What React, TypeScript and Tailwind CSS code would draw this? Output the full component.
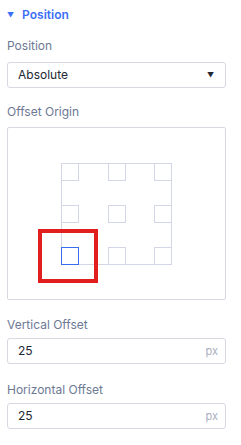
import React from 'react';

const font = { fontFamily: 'Inter, "Noto Sans", sans-serif' };

const Cell: React.FC<{ active?: boolean }> = ({ active }) => (
  <div className={`w-[18px] h-[18px] border ${active ? 'border-[#3a6cf0]' : 'border-[#d3d6e6]'}`} />
);

const OffsetInput: React.FC<{ value: string }> = ({ value }) => (
  <div className="h-[26px] rounded-[3px] border border-[#d6d9e4] bg-white flex items-center pl-[10px] pr-[7px]">
    <span className="flex-1 text-[12px] text-[#222733]">{value}</span>
    <span className="text-[11px] text-[#a9aec0]">px</span>
  </div>
);

export default function App() {
  // selected origin: bottom-left
  const grid = [
    [false, false, false],
    [false, false, false],
    [true, false, false],
  ];

  return (
    <div className="w-[241px] h-[445px] bg-white pl-[7px] pr-[15px] flex flex-col" style={font}>
      {/* Section header */}
      <div className="flex items-center gap-[8px] h-[20px] mt-[5px]">
        <span className="text-[7px] leading-none text-[#3b6ff6]">▼</span>
        <span className="text-[12px] font-semibold text-[#3b6ff6]">Position</span>
      </div>

      <label className="mt-[13px] h-[16px] leading-[16px] text-[12px] text-[#6d7894]">Position</label>
      <div className="mt-[8px] h-[26px] rounded-[3px] border border-[#d6d9e4] flex items-center pl-[10px] pr-[11px]">
        <span className="flex-1 text-[12px] text-[#222733]">Absolute</span>
        <span className="text-[7px] leading-none text-[#222733]">▼</span>
      </div>

      <label className="mt-[16px] h-[16px] leading-[16px] text-[12px] text-[#6d7894]">Offset Origin</label>
      <div className="mt-[7px] h-[173px] border border-[#d6d9e4] rounded-[2px] relative flex items-center justify-center">
        <div className="w-[111px] h-[102px] shadow-[inset_0_0_0_1px_#d3d6e6] flex flex-col justify-between">
          {grid.map((row, r) => (
            <div key={r} className="flex justify-between">
              {row.map((active, c) => (
                <Cell key={c} active={active} />
              ))}
            </div>
          ))}
        </div>
        {/* highlight annotation */}
        <div className="absolute left-[30px] top-[101px] w-[60px] h-[54px] border-[4px] border-[#e21f1f]" />
      </div>

      <label className="mt-[17px] h-[16px] leading-[16px] text-[12px] text-[#6d7894]">Vertical Offset</label>
      <div className="mt-[5px]">
        <OffsetInput value="25" />
      </div>

      <label className="mt-[18px] h-[16px] leading-[16px] text-[12px] text-[#6d7894]">Horizontal Offset</label>
      <div className="mt-[5px]">
        <OffsetInput value="25" />
      </div>
    </div>
  );
}
